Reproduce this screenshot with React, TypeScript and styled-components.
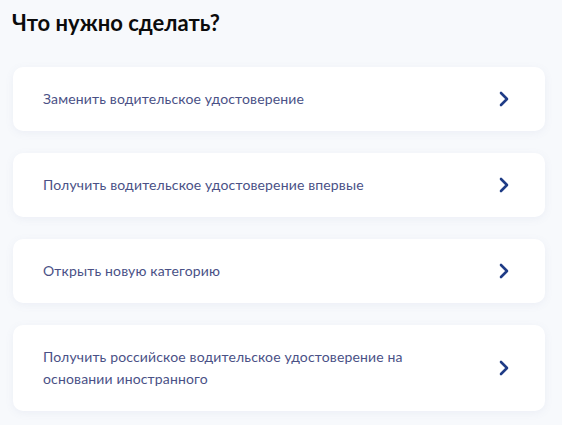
import React from 'react'
import styled, { createGlobalStyle } from 'styled-components'

const GlobalStyle = createGlobalStyle`
  html, body {
    margin: 0;
    padding: 0;
    background: #f7f9fc;
  }
  body {
    font-family: Lato, 'Noto Sans', sans-serif;
  }
`

const Page = styled.div`
  width: 562px;
  height: 425px;
  overflow: hidden;
  padding: 8px 17px 0 13px;
  box-sizing: border-box;
`

const Title = styled.h1`
  margin: 0 0 0 -1px;
  font-size: 22px;
  line-height: 30px;
  font-weight: 700;
  color: #0b0b0b;
`

const List = styled.div`
  display: flex;
  flex-direction: column;
  gap: 22px;
  margin-top: 29px;
`

const Card = styled.a`
  display: flex;
  align-items: center;
  justify-content: space-between;
  background: #ffffff;
  border-radius: 10px;
  padding: 21px 35px 21px 30px;
  box-shadow: 0 2px 8px rgba(100, 120, 160, 0.08);
  cursor: pointer;
`

const Label = styled.span`
  max-width: 400px;
  font-size: 14px;
  line-height: 22px;
  color: #4a5186;
  letter-spacing: 0.15px;
`

const Chevron = () => (
  <svg width="12" height="16" viewBox="0 0 12 16" fill="none">
    <path d="M3 2 L9 8 L3 14" stroke="#1f3c86" strokeWidth="2.6" strokeLinecap="round" strokeLinejoin="round" />
  </svg>
)

const items = [
  'Заменить водительское удостоверение',
  'Получить водительское удостоверение впервые',
  'Открыть новую категорию',
  'Получить российское водительское удостоверение на основании иностранного',
]

export default function App() {
  return (
    <>
      <GlobalStyle />
      <Page>
        <Title>Что нужно сделать?</Title>
        <List>
          {items.map((text) => (
            <Card key={text}>
              <Label>{text}</Label>
              <Chevron />
            </Card>
          ))}
        </List>
      </Page>
    </>
  )
}
